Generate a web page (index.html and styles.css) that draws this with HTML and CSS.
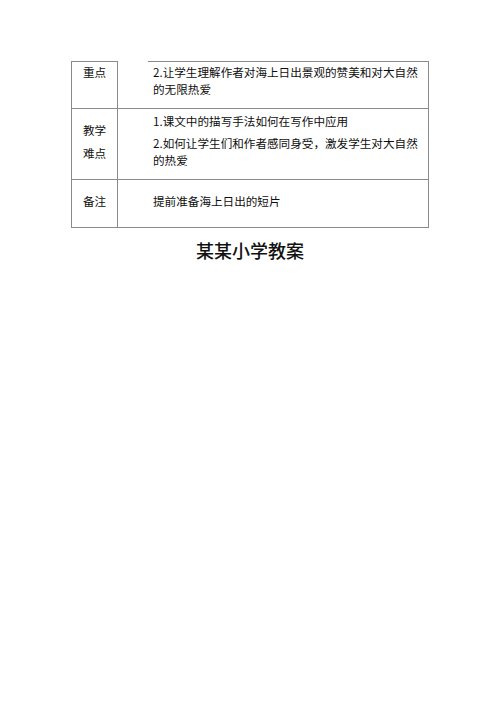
FILE: index.html
```html
<!DOCTYPE html>
<html lang="zh">
<head>
<meta charset="utf-8">
<link rel="stylesheet" href="styles.css">
</head>
<body>
<div class="sheet">
  <div class="plan">
    <div class="label first">
      <p>重点</p>
    </div>
    <div class="content first">
      <div class="topline">
        <p>2.让学生理解作者对海上日出景观的赞美和对大自然的无限热爱</p>
      </div>
    </div>

    <div class="label mid">
      <p>教学</p>
      <p>难点</p>
    </div>
    <div class="content mid">
      <p>1.课文中的描写手法如何在写作中应用</p>
      <p>2.如何让学生们和作者感同身受，激发学生对大自然的热爱</p>
    </div>

    <div class="label last">
      <p>备注</p>
    </div>
    <div class="content last">
      <p>提前准备海上日出的短片</p>
    </div>
  </div>
  <h1 class="title">某某小学教案</h1>
</div>
</body>
</html>
```

FILE: styles.css
```css
* {
  box-sizing: border-box;
}

html, body {
  margin: 0;
  padding: 0;
  background: #ffffff;
}

body {
  font-family: "Noto Sans CJK SC", "Noto Sans", sans-serif;
  color: #0e0e0e;
  font-size: 11.6px;
  line-height: 17px;
}

.sheet {
  padding-top: 61px;
}

p {
  margin: 0;
}

.plan {
  width: 358px;
  margin: 0 auto;
  display: grid;
  grid-template-columns: 46px 1fr;
  border-left: 1px solid #8a8a8a;
  border-right: 1px solid #8a8a8a;
  border-bottom: 1px solid #8a8a8a;
}

.label {
  border-right: 1px solid #8a8a8a;
  border-top: 1px solid #8a8a8a;
  text-align: center;
  display: flex;
  flex-direction: column;
  align-items: center;
}

.content {
  border-top: 1px solid #8a8a8a;
  padding-left: 35px;
  padding-right: 6px;
  display: flex;
  flex-direction: column;
}

.content.first {
  border-top: none;
  padding-left: 0;
  padding-right: 0;
}

.topline {
  margin-left: 30px;
  border-top: 1px solid #8a8a8a;
  padding: 2px 6px 0 5px;
  height: 47px;
}

.label.first {
  padding-top: 2px;
  height: 47px;
}

.label.mid {
  padding-top: 13px;
  gap: 6px;
  height: 71px;
}

.content.mid {
  padding-top: 4px;
  gap: 5px;
}

.label.last,
.content.last {
  padding-top: 13px;
  height: 48px;
}

.title {
  margin: 10px 0 0;
  text-align: center;
  font-size: 18px;
  line-height: 24px;
  font-weight: 500;
  color: #111111;
}
```
